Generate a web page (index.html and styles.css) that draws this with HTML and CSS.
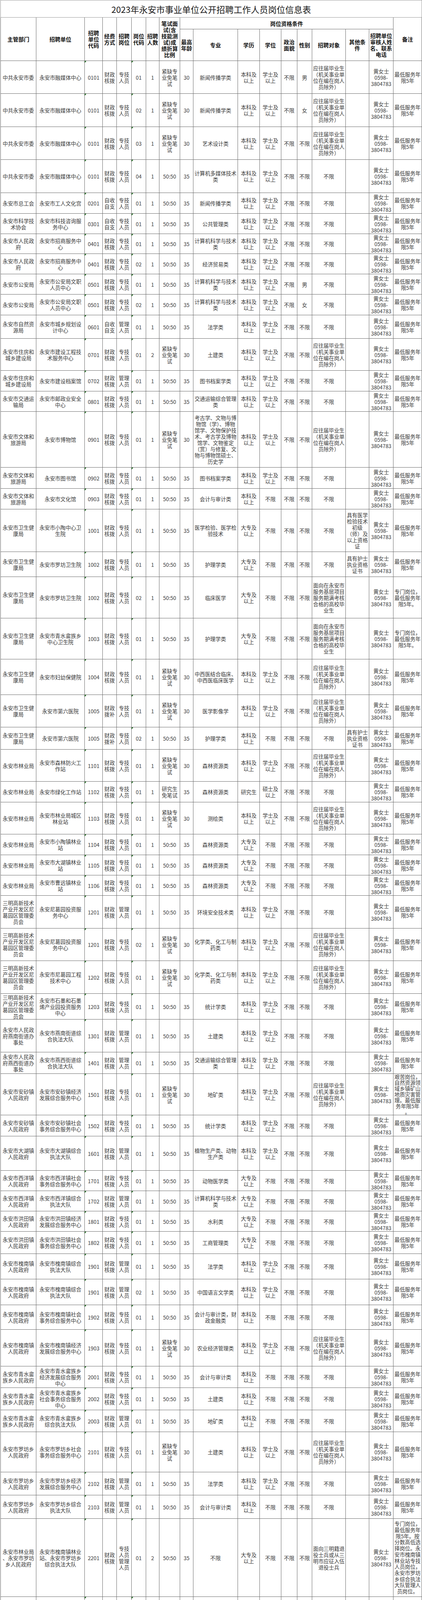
FILE: index.html
```html
<!DOCTYPE html>
<html lang="zh-CN">
<head>
<meta charset="utf-8">
<title>2023年永安市事业单位公开招聘工作人员岗位信息表</title>
<link rel="stylesheet" href="styles.css">
</head>
<body>
<table class="sheet">
<colgroup>
<col class="c1"><col class="c2"><col class="c3"><col class="c4"><col class="c5"><col class="c6"><col class="c7"><col class="c8"><col class="c9"><col class="c10"><col class="c11"><col class="c12"><col class="c13"><col class="c14"><col class="c15"><col class="c16"><col class="c17"><col class="c18">
</colgroup>
<thead>
<tr class="h44"><td colspan="18" class="title">2023年永安市事业单位公开招聘工作人员岗位信息表</td></tr>
<tr class="h30">
<th rowspan="2">主管部门</th>
<th rowspan="2">招聘单位</th>
<th rowspan="2">招聘<br>单位<br>代码</th>
<th rowspan="2">经费<br>方式</th>
<th rowspan="2">招聘<br>岗位</th>
<th rowspan="2">岗位<br>代码</th>
<th rowspan="2">招聘<br>人数</th>
<th rowspan="2">笔试面<br>试(含<br>技能测<br>试)成<br>绩折算<br>比例</th>
<th colspan="9">岗位资格条件</th>
<th rowspan="2">备注</th>
</tr>
<tr class="h81">
<th>最高<br>年龄</th>
<th>专业</th>
<th>学历</th>
<th>学位</th>
<th>政治<br>面貌</th>
<th>性别</th>
<th>招聘对象</th>
<th>其他条<br>件</th>
<th>招聘单位<br>审核人姓<br>名、联系<br>电话</th>
</tr>
</thead>
<tbody>
<tr class="h84"><td>中共永安市委</td><td>永安市融媒体中心</td><td class="t">0101</td><td>财政<br>核拨</td><td>专技<br>人员</td><td class="t">01</td><td>1</td><td>紧缺专<br>业免笔<br>试</td><td>30</td><td>新闻传播学类</td><td>本科及<br>以上</td><td>学士及<br>以上</td><td>不限</td><td>男</td><td>应往届毕业生<br>（机关事业单<br>位在编在岗人<br>员除外）</td><td></td><td>黄女士<br>0598-<br>3804783</td><td>最低服务年<br>限5年</td></tr>
<tr class="h85"><td>中共永安市委</td><td>永安市融媒体中心</td><td class="t">0101</td><td>财政<br>核拨</td><td>专技<br>人员</td><td class="t">02</td><td>1</td><td>紧缺专<br>业免笔<br>试</td><td>30</td><td>新闻传播学类</td><td>本科及<br>以上</td><td>学士及<br>以上</td><td>不限</td><td>女</td><td>应往届毕业生<br>（机关事业单<br>位在编在岗人<br>员除外）</td><td></td><td>黄女士<br>0598-<br>3804783</td><td>最低服务年<br>限5年</td></tr>
<tr class="h84"><td>中共永安市委</td><td>永安市融媒体中心</td><td class="t">0101</td><td>财政<br>核拨</td><td>专技<br>人员</td><td class="t">03</td><td>1</td><td>紧缺专<br>业免笔<br>试</td><td>30</td><td>艺术设计类</td><td>本科及<br>以上</td><td>学士及<br>以上</td><td>不限</td><td>不限</td><td>应往届毕业生<br>（机关事业单<br>位在编在岗人<br>员除外）</td><td></td><td>黄女士<br>0598-<br>3804783</td><td>最低服务年<br>限5年</td></tr>
<tr class="h85"><td>中共永安市委</td><td>永安市融媒体中心</td><td class="t">0101</td><td>财政<br>核拨</td><td>专技<br>人员</td><td class="t">04</td><td>1</td><td>50:50</td><td>35</td><td>计算机多媒体技术<br>类</td><td>本科及<br>以上</td><td>学士及<br>以上</td><td>不限</td><td>不限</td><td>不限</td><td></td><td>黄女士<br>0598-<br>3804783</td><td>最低服务年<br>限5年</td></tr>
<tr class="h53"><td>永安市总工会</td><td>永安市工人文化宫</td><td class="t">0201</td><td>自收<br>自支</td><td>专技<br>人员</td><td class="t">01</td><td>1</td><td>50:50</td><td>35</td><td>新闻传播学类</td><td>本科及<br>以上</td><td>学士及<br>以上</td><td>不限</td><td>不限</td><td>不限</td><td></td><td>黄女士<br>0598-<br>3804783</td><td>最低服务年<br>限5年</td></tr>
<tr class="h52"><td>永安市科学技<br>术协会</td><td>永安市科技咨询服<br>务中心</td><td class="t">0301</td><td>自收<br>自支</td><td>专技<br>人员</td><td class="t">01</td><td>1</td><td>50:50</td><td>35</td><td>公共管理类</td><td>本科及<br>以上</td><td>学士及<br>以上</td><td>不限</td><td>不限</td><td>不限</td><td></td><td>黄女士<br>0598-<br>3804783</td><td>最低服务年<br>限5年</td></tr>
<tr class="h51"><td>永安市人民政<br>府</td><td>永安市招商服务中<br>心</td><td class="t">0401</td><td>财政<br>核拨</td><td>专技<br>人员</td><td class="t">01</td><td>1</td><td>50:50</td><td>35</td><td>计算机科学与技术<br>类</td><td>本科及<br>以上</td><td>学士及<br>以上</td><td>不限</td><td>不限</td><td>不限</td><td></td><td>黄女士<br>0598-<br>3804783</td><td>最低服务年<br>限5年</td></tr>
<tr class="h52"><td>永安市人民政<br>府</td><td>永安市招商服务中<br>心</td><td class="t">0401</td><td>财政<br>核拨</td><td>专技<br>人员</td><td class="t">02</td><td>1</td><td>50:50</td><td>35</td><td>经济贸易类</td><td>本科及<br>以上</td><td>学士及<br>以上</td><td>不限</td><td>不限</td><td>不限</td><td></td><td>黄女士<br>0598-<br>3804783</td><td>最低服务年<br>限5年</td></tr>
<tr class="h52"><td>永安市公安局</td><td>永安市公安局文职<br>人员中心</td><td class="t">0501</td><td>财政<br>核拨</td><td>专技<br>人员</td><td class="t">01</td><td>1</td><td>50:50</td><td>35</td><td>计算机科学与技术<br>类</td><td>本科及<br>以上</td><td>学士及<br>以上</td><td>不限</td><td>男</td><td>不限</td><td></td><td>黄女士<br>0598-<br>3804783</td><td>最低服务年<br>限5年</td></tr>
<tr class="h53"><td>永安市公安局</td><td>永安市公安局文职<br>人员中心</td><td class="t">0501</td><td>财政<br>核拨</td><td>专技<br>人员</td><td class="t">02</td><td>1</td><td>50:50</td><td>35</td><td>计算机科学与技术<br>类</td><td>本科及<br>以上</td><td>学士及<br>以上</td><td>不限</td><td>女</td><td>不限</td><td></td><td>黄女士<br>0598-<br>3804783</td><td>最低服务年<br>限5年</td></tr>
<tr class="h60"><td>永安市自然资<br>源局</td><td>永安市城乡规划设<br>计中心</td><td class="t">0601</td><td>自收<br>自支</td><td>管理<br>人员</td><td class="t">01</td><td>1</td><td>50:50</td><td>35</td><td>法学类</td><td>本科及<br>以上</td><td>学士及<br>以上</td><td>不限</td><td>不限</td><td>不限</td><td></td><td>黄女士<br>0598-<br>3804783</td><td>最低服务年<br>限5年</td></tr>
<tr class="h82"><td>永安市住房和<br>城乡建设局</td><td>永安市建设工程技<br>术服务中心</td><td class="t">0701</td><td>财政<br>核拨</td><td>专技<br>人员</td><td class="t">01</td><td>2</td><td>紧缺专<br>业免笔<br>试</td><td>30</td><td>土建类</td><td>本科及<br>以上</td><td>学士及<br>以上</td><td>不限</td><td>不限</td><td>应往届毕业生<br>（机关事业单<br>位在编在岗人<br>员除外）</td><td></td><td>黄女士<br>0598-<br>3804783</td><td>最低服务年<br>限5年</td></tr>
<tr class="h53"><td>永安市住房和<br>城乡建设局</td><td>永安市建设档案馆</td><td class="t">0702</td><td>财政<br>核拨</td><td>管理<br>人员</td><td class="t">01</td><td>1</td><td>50:50</td><td>35</td><td>图书档案学类</td><td>本科及<br>以上</td><td>学士及<br>以上</td><td>不限</td><td>不限</td><td>不限</td><td></td><td>黄女士<br>0598-<br>3804783</td><td>最低服务年<br>限5年</td></tr>
<tr class="h52"><td>永安市交通运<br>输局</td><td>永安市邮政业安全<br>中心</td><td class="t">0801</td><td>财政<br>核拨</td><td>专技<br>人员</td><td class="t">01</td><td>1</td><td>50:50</td><td>35</td><td>交通运输综合管理<br>类</td><td>本科及<br>以上</td><td>学士及<br>以上</td><td>不限</td><td>不限</td><td>不限</td><td></td><td>黄女士<br>0598-<br>3804783</td><td>最低服务年<br>限5年</td></tr>
<tr class="h143"><td>永安市文体和<br>旅游局</td><td>永安市博物馆</td><td class="t">0901</td><td>财政<br>核拨</td><td>专技<br>人员</td><td class="t">01</td><td>1</td><td>紧缺专<br>业免笔<br>试</td><td>30</td><td>考古学、文物与博<br>物馆（学）、博物<br>馆学、文物保护技<br>术、考古学及博物<br>馆学、文物鉴定<br>（赏）与修复、文<br>物与博物馆硕士、<br>历史学</td><td>本科及<br>以上</td><td>学士及<br>以上</td><td>不限</td><td>不限</td><td>应往届毕业生<br>（机关事业单<br>位在编在岗人<br>员除外）</td><td></td><td>黄女士<br>0598-<br>3804783</td><td>最低服务年<br>限5年</td></tr>
<tr class="h54"><td>永安市文体和<br>旅游局</td><td>永安市图书馆</td><td class="t">0902</td><td>财政<br>核拨</td><td>专技<br>人员</td><td class="t">01</td><td>1</td><td>50:50</td><td>35</td><td>图书档案学类</td><td>本科及<br>以上</td><td>学士及<br>以上</td><td>不限</td><td>不限</td><td>不限</td><td></td><td>黄女士<br>0598-<br>3804783</td><td>最低服务年<br>限5年</td></tr>
<tr class="h53"><td>永安市文体和<br>旅游局</td><td>永安市文化馆</td><td class="t">0903</td><td>财政<br>核拨</td><td>专技<br>人员</td><td class="t">01</td><td>1</td><td>50:50</td><td>35</td><td>会计与审计类</td><td>本科及<br>以上</td><td>不限</td><td>不限</td><td>不限</td><td>不限</td><td></td><td>黄女士<br>0598-<br>3804783</td><td>最低服务年<br>限5年</td></tr>
<tr class="h109"><td>永安市卫生健<br>康局</td><td>永安市小陶中心卫<br>生院</td><td class="t">1001</td><td>财政<br>核拨</td><td>专技<br>人员</td><td class="t">01</td><td>1</td><td>50:50</td><td>35</td><td>医学检验、医学检<br>验技术</td><td>大专及<br>以上</td><td>不限</td><td>不限</td><td>不限</td><td>不限</td><td>具有医学<br>检验技术<br>初级<br>（师）及<br>以上资格<br>证</td><td>黄女士<br>0598-<br>3804783</td><td>最低服务年<br>限5年</td></tr>
<tr class="h64"><td>永安市卫生健<br>康局</td><td>永安市罗坊卫生院</td><td class="t">1002</td><td>财政<br>核拨</td><td>专技<br>人员</td><td class="t">01</td><td>1</td><td>50:50</td><td>35</td><td>护理学类</td><td>大专及<br>以上</td><td>不限</td><td>不限</td><td>不限</td><td>不限</td><td>具有护士<br>执业资格<br>证书</td><td>黄女士<br>0598-<br>3804783</td><td>最低服务年<br>限5年</td></tr>
<tr class="h106"><td>永安市卫生健<br>康局</td><td>永安市罗坊卫生院</td><td class="t">1002</td><td>财政<br>核拨</td><td>专技<br>人员</td><td class="t">02</td><td>1</td><td>50:50</td><td>35</td><td>临床医学</td><td>大专及<br>以上</td><td>不限</td><td>不限</td><td>不限</td><td>面向在永安市<br>服务基层项目<br>服务期满考核<br>合格的高校毕<br>业生</td><td></td><td>黄女士<br>0598-<br>3804783</td><td>专门岗位，<br>最低服务年<br>限5年。</td></tr>
<tr class="h105"><td>永安市卫生健<br>康局</td><td>永安市青水畲族乡<br>中心卫生院</td><td class="t">1003</td><td>财政<br>核拨</td><td>专技<br>人员</td><td class="t">01</td><td>1</td><td>50:50</td><td>35</td><td>护理学类</td><td>大专及<br>以上</td><td>不限</td><td>不限</td><td>不限</td><td>面向在永安市<br>服务基层项目<br>服务期满考核<br>合格的高校毕<br>业生</td><td></td><td>黄女士<br>0598-<br>3804783</td><td>专门岗位，<br>最低服务年<br>限5年。</td></tr>
<tr class="h91"><td>永安市卫生健<br>康局</td><td>永安市妇幼保健院</td><td class="t">1004</td><td>财政<br>核拨</td><td>专技<br>人员</td><td class="t">01</td><td>1</td><td>紧缺专<br>业免笔<br>试</td><td>30</td><td>中西医结合临床、<br>中西医临床医学</td><td>本科及<br>以上</td><td>学士及<br>以上</td><td>不限</td><td>不限</td><td>应往届毕业生<br>（机关事业单<br>位在编在岗人<br>员除外）</td><td></td><td>黄女士<br>0598-<br>3804783</td><td>最低服务年<br>限5年</td></tr>
<tr class="h83"><td>永安市卫生健<br>康局</td><td>永安市第六医院</td><td class="t">1005</td><td>财政<br>拨补</td><td>专技<br>人员</td><td class="t">01</td><td>1</td><td>紧缺专<br>业免笔<br>试</td><td>30</td><td>医学影像学</td><td>本科及<br>以上</td><td>学士及<br>以上</td><td>不限</td><td>不限</td><td>应往届毕业生<br>（机关事业单<br>位在编在岗人<br>员除外）</td><td></td><td>黄女士<br>0598-<br>3804783</td><td>最低服务年<br>限5年</td></tr>
<tr class="h57"><td>永安市卫生健<br>康局</td><td>永安市第六医院</td><td class="t">1005</td><td>财政<br>拨补</td><td>专技<br>人员</td><td class="t">02</td><td>1</td><td>50:50</td><td>35</td><td>护理学类</td><td>本科及<br>以上</td><td>不限</td><td>不限</td><td>不限</td><td>不限</td><td>具有护士<br>执业资格<br>证书</td><td>黄女士<br>0598-<br>3804783</td><td>最低服务年<br>限5年</td></tr>
<tr class="h82"><td>永安市林业局</td><td>永安市森林防火工<br>作站</td><td class="t">1101</td><td>财政<br>核拨</td><td>专技<br>人员</td><td class="t">01</td><td>1</td><td>紧缺专<br>业免笔<br>试</td><td>30</td><td>森林资源类</td><td>本科及<br>以上</td><td>学士及<br>以上</td><td>不限</td><td>不限</td><td>应往届毕业生<br>（机关事业单<br>位在编在岗人<br>员除外）</td><td></td><td>黄女士<br>0598-<br>3804783</td><td>最低服务年<br>限5年</td></tr>
<tr class="h53"><td>永安市林业局</td><td>永安市绿化工作站</td><td class="t">1102</td><td>财政<br>核拨</td><td>专技<br>人员</td><td class="t">01</td><td>1</td><td>研究生<br>免笔试</td><td>35</td><td>森林资源类</td><td>研究生</td><td>硕士及<br>以上</td><td>不限</td><td>不限</td><td>不限</td><td></td><td>黄女士<br>0598-<br>3804783</td><td>最低服务年<br>限5年</td></tr>
<tr class="h82"><td>永安市林业局</td><td>永安市林业局城区<br>林业站</td><td class="t">1103</td><td>财政<br>核拨</td><td>专技<br>人员</td><td class="t">01</td><td>1</td><td>紧缺专<br>业免笔<br>试</td><td>30</td><td>测绘类</td><td>本科及<br>以上</td><td>学士及<br>以上</td><td>不限</td><td>不限</td><td>应往届毕业生<br>（机关事业单<br>位在编在岗人<br>员除外）</td><td></td><td>黄女士<br>0598-<br>3804783</td><td>最低服务年<br>限5年</td></tr>
<tr class="h53"><td>永安市林业局</td><td>永安市小陶镇林业<br>站</td><td class="t">1104</td><td>财政<br>核拨</td><td>专技<br>人员</td><td class="t">01</td><td>1</td><td>50:50</td><td>35</td><td>森林资源类</td><td>大专及<br>以上</td><td>不限</td><td>不限</td><td>不限</td><td>不限</td><td></td><td>黄女士<br>0598-<br>3804783</td><td>最低服务年<br>限5年</td></tr>
<tr class="h52"><td>永安市林业局</td><td>永安市大湖镇林业<br>站</td><td class="t">1105</td><td>财政<br>核拨</td><td>专技<br>人员</td><td class="t">01</td><td>1</td><td>50:50</td><td>35</td><td>森林资源类</td><td>大专及<br>以上</td><td>不限</td><td>不限</td><td>不限</td><td>不限</td><td></td><td>黄女士<br>0598-<br>3804783</td><td>最低服务年<br>限5年</td></tr>
<tr class="h52"><td>永安市林业局</td><td>永安市曹远镇林业<br>站</td><td class="t">1106</td><td>财政<br>核拨</td><td>专技<br>人员</td><td class="t">01</td><td>1</td><td>50:50</td><td>35</td><td>森林资源类</td><td>大专及<br>以上</td><td>不限</td><td>不限</td><td>不限</td><td>不限</td><td></td><td>黄女士<br>0598-<br>3804783</td><td>最低服务年<br>限5年</td></tr>
<tr class="h84"><td>三明高新技术<br>产业开发区尼<br>葛园区管理委<br>员会</td><td>永安尼葛园投资服<br>务中心</td><td class="t">1201</td><td>财政<br>核拨</td><td>管理<br>人员</td><td class="t">01</td><td>1</td><td>50:50</td><td>35</td><td>环境安全技术类</td><td>本科及<br>以上</td><td>学士及<br>以上</td><td>不限</td><td>不限</td><td>不限</td><td></td><td>黄女士<br>0598-<br>3804783</td><td>最低服务年<br>限5年</td></tr>
<tr class="h83"><td>三明高新技术<br>产业开发区尼<br>葛园区管理委<br>员会</td><td>永安尼葛园投资服<br>务中心</td><td class="t">1201</td><td>财政<br>核拨</td><td>专技<br>人员</td><td class="t">02</td><td>1</td><td>紧缺专<br>业免笔<br>试</td><td>30</td><td>化学类、化工与制<br>药类</td><td>本科及<br>以上</td><td>学士及<br>以上</td><td>不限</td><td>不限</td><td>应往届毕业生<br>（机关事业单<br>位在编在岗人<br>员除外）</td><td></td><td>黄女士<br>0598-<br>3804783</td><td>最低服务年<br>限5年</td></tr>
<tr class="h84"><td>三明高新技术<br>产业开发区尼<br>葛园区管理委<br>员会</td><td>永安市尼葛园工程<br>技术中心</td><td class="t">1202</td><td>财政<br>核拨</td><td>专技<br>人员</td><td class="t">01</td><td>1</td><td>紧缺专<br>业免笔<br>试</td><td>30</td><td>化学类、化工与制<br>药类</td><td>本科及<br>以上</td><td>学士及<br>以上</td><td>不限</td><td>不限</td><td>应往届毕业生<br>（机关事业单<br>位在编在岗人<br>员除外）</td><td></td><td>黄女士<br>0598-<br>3804783</td><td>最低服务年<br>限5年</td></tr>
<tr class="h66"><td>三明高新技术<br>产业开发区尼<br>葛园区管理委<br>员会</td><td>永安市石墨和石墨<br>烯产业园投资服务<br>中心</td><td class="t">1203</td><td>财政<br>核拨</td><td>专技<br>人员</td><td class="t">01</td><td>1</td><td>50:50</td><td>35</td><td>统计学类</td><td>本科及<br>以上</td><td>学士及<br>以上</td><td>不限</td><td>不限</td><td>不限</td><td></td><td>黄女士<br>0598-<br>3804783</td><td>最低服务年<br>限5年</td></tr>
<tr class="h84"><td>永安市人民政<br>府燕南街道办<br>事处</td><td>永安市燕南街道综<br>合执法大队</td><td class="t">1301</td><td>财政<br>核拨</td><td>管理<br>人员</td><td class="t">01</td><td>1</td><td>50:50</td><td>35</td><td>土建类</td><td>本科及<br>以上</td><td>学士及<br>以上</td><td>不限</td><td>不限</td><td>不限</td><td></td><td>黄女士<br>0598-<br>3804783</td><td>最低服务年<br>限5年</td></tr>
<tr class="h55"><td>永安市人民政<br>府燕西街道办<br>事处</td><td>永安市燕西街道综<br>合执法大队</td><td class="t">1401</td><td>财政<br>核拨</td><td>管理<br>人员</td><td class="t">01</td><td>1</td><td>50:50</td><td>35</td><td>交通运输综合管理<br>类</td><td>本科及<br>以上</td><td>学士及<br>以上</td><td>不限</td><td>不限</td><td>不限</td><td></td><td>黄女士<br>0598-<br>3804783</td><td>最低服务年<br>限5年</td></tr>
<tr class="h106"><td>永安市安砂镇<br>人民政府</td><td>永安市安砂镇经济<br>发展综合服务中心</td><td class="t">1501</td><td>财政<br>核拨</td><td>专技<br>人员</td><td class="t">01</td><td>1</td><td>紧缺专<br>业免笔<br>试</td><td>30</td><td>地矿类</td><td>本科及<br>以上</td><td>学士及<br>以上</td><td>不限</td><td>不限</td><td>应往届毕业生<br>（机关事业单<br>位在编在岗人<br>员除外）</td><td></td><td>黄女士<br>0598-<br>3804783</td><td class="tight">艰苦岗位，<br>自然资源领<br>域乡镇矿山<br>地质灾害管<br>理。最低服<br>务年限5年<br>。</td></tr>
<tr class="h54"><td>永安市安砂镇<br>人民政府</td><td>永安市安砂镇社会<br>事务综合服务中心</td><td class="t">1502</td><td>财政<br>核拨</td><td>专技<br>人员</td><td class="t">01</td><td>1</td><td>50:50</td><td>35</td><td>统计学类</td><td>本科及<br>以上</td><td>学士及<br>以上</td><td>不限</td><td>不限</td><td>不限</td><td></td><td>黄女士<br>0598-<br>3804783</td><td>最低服务年<br>限5年</td></tr>
<tr class="h88"><td>永安市大湖镇<br>人民政府</td><td>永安市大湖镇综合<br>执法大队</td><td class="t">1601</td><td>财政<br>核拨</td><td>管理<br>人员</td><td class="t">01</td><td>1</td><td>50:50</td><td>35</td><td>植物生产类、动物<br>生产类</td><td>本科及<br>以上</td><td>学士及<br>以上</td><td>不限</td><td>不限</td><td>不限</td><td></td><td>黄女士<br>0598-<br>3804783</td><td>最低服务年<br>限5年</td></tr>
<tr class="h52"><td>永安市西洋镇<br>人民政府</td><td>永安市西洋镇社会<br>事务综合服务中心</td><td class="t">1701</td><td>财政<br>核拨</td><td>专技<br>人员</td><td class="t">01</td><td>1</td><td>50:50</td><td>35</td><td>动物医学类</td><td>大专及<br>以上</td><td>不限</td><td>不限</td><td>不限</td><td>不限</td><td></td><td>黄女士<br>0598-<br>3804783</td><td>最低服务年<br>限5年</td></tr>
<tr class="h52"><td>永安市西洋镇<br>人民政府</td><td>永安市西洋镇综合<br>执法大队</td><td class="t">1702</td><td>财政<br>核拨</td><td>管理<br>人员</td><td class="t">01</td><td>1</td><td>50:50</td><td>35</td><td>计算机科学与技术<br>类</td><td>大专及<br>以上</td><td>不限</td><td>不限</td><td>不限</td><td>不限</td><td></td><td>黄女士<br>0598-<br>3804783</td><td>最低服务年<br>限5年</td></tr>
<tr class="h52"><td>永安市洪田镇<br>人民政府</td><td>永安市洪田镇经济<br>发展综合服务中心</td><td class="t">1801</td><td>财政<br>核拨</td><td>专技<br>人员</td><td class="t">01</td><td>1</td><td>50:50</td><td>35</td><td>水利类</td><td>大专及<br>以上</td><td>不限</td><td>不限</td><td>不限</td><td>不限</td><td></td><td>黄女士<br>0598-<br>3804783</td><td>最低服务年<br>限5年</td></tr>
<tr class="h57"><td>永安市洪田镇<br>人民政府</td><td>永安市洪田镇社会<br>事务综合服务中心</td><td class="t">1802</td><td>财政<br>核拨</td><td>专技<br>人员</td><td class="t">01</td><td>1</td><td>50:50</td><td>35</td><td>工商管理类</td><td>大专及<br>以上</td><td>不限</td><td>不限</td><td>不限</td><td>不限</td><td></td><td>黄女士<br>0598-<br>3804783</td><td>最低服务年<br>限5年</td></tr>
<tr class="h65"><td>永安市槐南镇<br>人民政府</td><td>永安市槐南镇综合<br>执法大队</td><td class="t">1901</td><td>财政<br>核拨</td><td>管理<br>人员</td><td class="t">01</td><td>1</td><td>50:50</td><td>35</td><td>法学类</td><td>本科及<br>以上</td><td>学士及<br>以上</td><td>不限</td><td>不限</td><td>不限</td><td></td><td>黄女士<br>0598-<br>3804783</td><td>最低服务年<br>限5年</td></tr>
<tr class="h66"><td>永安市槐南镇<br>人民政府</td><td>永安市槐南镇综合<br>执法大队</td><td class="t">1901</td><td>财政<br>核拨</td><td>管理<br>人员</td><td class="t">02</td><td>1</td><td>50:50</td><td>35</td><td>中国语言文学类</td><td>本科及<br>以上</td><td>学士及<br>以上</td><td>不限</td><td>不限</td><td>不限</td><td></td><td>黄女士<br>0598-<br>3804783</td><td>最低服务年<br>限5年</td></tr>
<tr class="h63"><td>永安市槐南镇<br>人民政府</td><td>永安市槐南镇社会<br>事务综合服务中心</td><td class="t">1902</td><td>财政<br>核拨</td><td>专技<br>人员</td><td class="t">01</td><td>1</td><td>50:50</td><td>35</td><td>会计与审计类，财<br>政金融类</td><td>本科及<br>以上</td><td>不限</td><td>不限</td><td>不限</td><td>不限</td><td></td><td>黄女士<br>0598-<br>3804783</td><td>最低服务年<br>限5年</td></tr>
<tr class="h94"><td>永安市槐南镇<br>人民政府</td><td>永安市槐南镇经济<br>发展综合服务中心</td><td class="t">1903</td><td>财政<br>核拨</td><td>专技<br>人员</td><td class="t">01</td><td>1</td><td>紧缺专<br>业免笔<br>试</td><td>30</td><td>农业经济管理类</td><td>本科及<br>以上</td><td>学士及<br>以上</td><td>不限</td><td>不限</td><td>应往届毕业生<br>（机关事业单<br>位在编在岗人<br>员除外）</td><td></td><td>黄女士<br>0598-<br>3804783</td><td>最低服务年<br>限5年</td></tr>
<tr class="h55"><td>永安市青水畲<br>族乡人民政府</td><td>永安市青水畲族乡<br>经济发展综合服务<br>中心</td><td class="t">2001</td><td>财政<br>核拨</td><td>专技<br>人员</td><td class="t">01</td><td>1</td><td>50:50</td><td>35</td><td>会计与审计类</td><td>本科及<br>以上</td><td>不限</td><td>不限</td><td>不限</td><td>不限</td><td></td><td>黄女士<br>0598-<br>3804783</td><td>最低服务年<br>限5年</td></tr>
<tr class="h57"><td>永安市青水畲<br>族乡人民政府</td><td>永安市青水畲族乡<br>社会事务综合服务<br>中心</td><td class="t">2002</td><td>财政<br>核拨</td><td>专技<br>人员</td><td class="t">01</td><td>1</td><td>50:50</td><td>35</td><td>土建类</td><td>本科及<br>以上</td><td>不限</td><td>不限</td><td>不限</td><td>不限</td><td></td><td>黄女士<br>0598-<br>3804783</td><td>最低服务年<br>限5年</td></tr>
<tr class="h56"><td>永安市青水畲<br>族乡人民政府</td><td>永安市青水畲族乡<br>综合执法大队</td><td class="t">2003</td><td>财政<br>核拨</td><td>管理<br>人员</td><td class="t">01</td><td>1</td><td>50:50</td><td>35</td><td>地矿类</td><td>本科及<br>以上</td><td>不限</td><td>不限</td><td>不限</td><td>不限</td><td></td><td>黄女士<br>0598-<br>3804783</td><td>最低服务年<br>限5年</td></tr>
<tr class="h103"><td>永安市罗坊乡<br>人民政府</td><td>永安市罗坊乡社会<br>事务综合服务中心</td><td class="t">2101</td><td>财政<br>核拨</td><td>专技<br>人员</td><td class="t">01</td><td>1</td><td>紧缺专<br>业免笔<br>试</td><td>30</td><td>土建类</td><td>本科及<br>以上</td><td>学士及<br>以上</td><td>不限</td><td>不限</td><td>应往届毕业生<br>（机关事业单<br>位在编在岗人<br>员除外）</td><td></td><td>黄女士<br>0598-<br>3804783</td><td>最低服务年<br>限5年</td></tr>
<tr class="h59"><td>永安市罗坊乡<br>人民政府</td><td>永安市罗坊乡经济<br>发展综合服务中心</td><td class="t">2102</td><td>财政<br>核拨</td><td>管理<br>人员</td><td class="t">01</td><td>1</td><td>50:50</td><td>35</td><td>法学类</td><td>本科及<br>以上</td><td>学士及<br>以上</td><td>不限</td><td>不限</td><td>不限</td><td></td><td>黄女士<br>0598-<br>3804783</td><td>最低服务年<br>限5年</td></tr>
<tr class="h60"><td>永安市罗坊乡<br>人民政府</td><td>永安市罗坊乡综合<br>执法大队</td><td class="t">2103</td><td>财政<br>核拨</td><td>管理<br>人员</td><td class="t">01</td><td>1</td><td>50:50</td><td>35</td><td>会计与审计类</td><td>本科及<br>以上</td><td>不限</td><td>不限</td><td>不限</td><td>不限</td><td></td><td>黄女士<br>0598-<br>3804783</td><td>最低服务年<br>限5年</td></tr>
<tr class="h200"><td>永安市林业局<br>、永安市罗坊<br>乡人民政府</td><td>永安市槐南镇林业<br>站、永安市罗坊乡<br>综合执法大队</td><td class="t">2201</td><td>财政<br>核拨</td><td>专技<br>人员<br>管理<br>人员</td><td class="t">01</td><td>2</td><td>50:50</td><td>35</td><td>不限</td><td>大专及<br>以上</td><td>不限</td><td>不限</td><td>不限</td><td>面向三明籍退<br>役士兵或从三<br>明市应征入伍<br>退役士兵</td><td></td><td>黄女士<br>0598-<br>3804783</td><td class="mid">专门岗位，<br>最低服务年<br>限5年。按<br>分数高低选<br>择岗位。永<br>安市槐南镇<br>林业站专技<br>人员岗位，<br>永安市罗坊<br>乡综合执法<br>大队管理人<br>员岗位。</td></tr>
<tr class="h96"><td>永安市林业局<br>、永安市槐南<br>镇人民政府</td><td>永安市罗坊乡林业<br>站、永安市槐南镇<br>综合执法大队</td><td class="t">2301</td><td>财政<br>核拨</td><td>管理<br>人员</td><td class="t">01</td><td>2</td><td>50:50</td><td>35</td><td>不限</td><td>大专及<br>以上</td><td>不限</td><td>不限</td><td>不限</td><td>面向在永安市<br>服务基层项目<br>服务期满考核<br>合格的高校毕<br>业生</td><td></td><td>黄女士<br>0598-<br>3804783</td><td class="mid">专门岗位，<br>最低服务年<br>限5年。按<br>分数高低选<br>择岗位。</td></tr>
<tr class="h30"><td></td><td></td><td></td><td></td><td></td><td></td><td></td><td></td><td></td><td></td><td></td><td></td><td></td><td></td><td></td><td></td><td></td><td></td></tr>
</tbody>
</table>
</body>
</html>
```

FILE: styles.css
```css
html, body {
  margin: 0;
  padding: 0;
  background: #ffffff;
}

body {
  font-family: "Noto Sans CJK SC", "Noto Sans", sans-serif;
  color: #3a3a3a;
}

.sheet {
  border-collapse: collapse;
  table-layout: fixed;
  width: 1079px;
  margin: 0 0 0 1px;
}

.c1 { width: 91px; }
.c2 { width: 124px; }
.c3 { width: 46px; }
.c4 { width: 36px; }
.c5 { width: 38px; }
.c6 { width: 37px; }
.c7 { width: 34px; }
.c8 { width: 53px; }
.c9 { width: 34px; }
.c10 { width: 114px; }
.c11 { width: 56px; }
.c12 { width: 55px; }
.c13 { width: 41px; }
.c14 { width: 38px; }
.c15 { width: 86px; }
.c16 { width: 60px; }
.c17 { width: 62px; }
.c18 { width: 73px; }

.sheet td,
.sheet th {
  border: 1px solid #6a6a6a;
  padding: 0 1px;
  text-align: center;
  vertical-align: middle;
  font-size: 13.4px;
  line-height: 16px;
  white-space: nowrap;
  overflow: hidden;
  font-weight: normal;
}

.sheet th {
  font-size: 14px;
  font-weight: bold;
  color: #111111;
}

.sheet .title {
  font-size: 22px;
  line-height: 26px;
  color: #1a1a1a;
  border-color: #9a9a9a;
}

.sheet .t {
  position: relative;
}

.sheet .t::before {
  content: "";
  position: absolute;
  left: 0;
  top: 0;
  width: 0;
  height: 0;
  border-top: 5px solid #1e6b1e;
  border-right: 4px solid transparent;
}

.sheet .tight { line-height: 15px; }
.sheet .mid { line-height: 15.7px; }

.h30 { height: 30px; }
.h44 { height: 44px; }
.h51 { height: 51px; }
.h52 { height: 52px; }
.h53 { height: 53px; }
.h54 { height: 54px; }
.h55 { height: 55px; }
.h56 { height: 56px; }
.h57 { height: 57px; }
.h59 { height: 59px; }
.h60 { height: 60px; }
.h63 { height: 63px; }
.h64 { height: 64px; }
.h65 { height: 65px; }
.h66 { height: 66px; }
.h81 { height: 81px; }
.h82 { height: 82px; }
.h83 { height: 83px; }
.h84 { height: 84px; }
.h85 { height: 85px; }
.h88 { height: 88px; }
.h91 { height: 91px; }
.h94 { height: 94px; }
.h96 { height: 96px; }
.h103 { height: 103px; }
.h105 { height: 105px; }
.h106 { height: 106px; }
.h109 { height: 109px; }
.h143 { height: 143px; }
.h200 { height: 200px; }
```
